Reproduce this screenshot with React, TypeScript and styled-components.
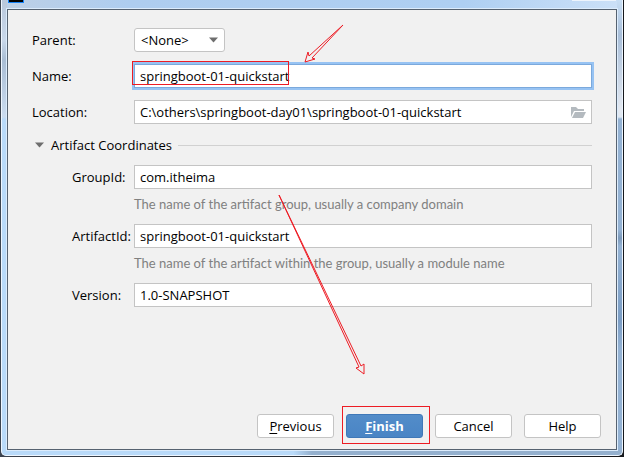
import React from "react";
import styled, { createGlobalStyle, css } from "styled-components";

const GlobalStyle = createGlobalStyle`
  * { box-sizing: border-box; }
  body {
    margin: 0;
    background: #202a38;
    color: #000;
    font-family: "Open Sans", "Noto Sans", sans-serif;
    font-size: 13px;
    line-height: 18px;
  }
  input, select, button { font: inherit; color: inherit; }
`;

const Screen = styled.div`
  display: flex;
  min-height: 100vh;
  padding: 0 1px 1px;
  background: linear-gradient(90deg, #3c4450, #16181c);
`;

const WindowFrame = styled.div`
  position: relative;
  flex: 1;
  display: flex;
  flex-direction: column;
  padding: 0 5px 5px;
  border: 1px solid #eef6ff;
  border-top: 0;
  border-radius: 0 0 5px 5px;
  background:
    linear-gradient(90deg, #b9daf9 0 47%, #94b0ce 50%) bottom / 100% 5px no-repeat,
    linear-gradient(#b9c8dc 0, #c9d8ea 40px, #a9bdd4 60px, #cbdcf0 117px, #b9daf9 119px) left / 5px 100% no-repeat,
    linear-gradient(#c9dff5 0, #a9bfd9 35px, #e3e8f0 110px, #dfe8f2 117px, #94b2d3 119px, #94b2d3 230px, #7c99ba 238px, #94b2d3 246px, #7b9dc4 320px, #94b2d3 350px) right / 5px 100% no-repeat,
    #b3d2f3;
`;

const TitleBar = styled.header`
  display: flex;
  justify-content: space-between;
  height: 9px;
  padding: 0 1px;
  background: linear-gradient(90deg, #bdd0e6, #aecdef 20%, #aecff2 75%, #cbe0f7);
`;

const AppIcon = styled.span`
  width: 16px;
  height: 3px;
  border: 1px solid #1683f7;
  border-top: 0;
  background: #000;
`;

const WindowControls = styled.span`
  width: 44px;
  height: 1px;
  background: #edf4fc;
`;

const Panel = styled.main`
  flex: 1;
  display: flex;
  flex-direction: column;
  border: 1px solid #566270;
  outline: 1px solid #dcecfc;
  background: #f1f1f1;
`;

const Form = styled.form`
  flex: 1;
  display: flex;
  flex-direction: column;
  padding: 18px 15px 11px 24px;
`;

const Fields = styled.div`
  display: grid;
  grid-template-columns: 102px 1fr;
  row-gap: 12px;
  align-items: center;
  padding-right: 9px;
`;

const Artifact = styled(Fields)`
  row-gap: 0;
  padding-top: 11px;
`;

const Label = styled.label<{ $nested?: boolean }>`
  padding-left: ${(p) => (p.$nested ? 40 : 0)}px;
  white-space: nowrap;
`;

const Control = styled.div`
  position: relative;
  display: flex;
  align-items: center;
`;

const TextInput = styled.input<{ $focused?: boolean }>`
  width: 100%;
  min-width: 0;
  height: 24px;
  padding: 0 5px;
  border: 1px solid #c4c4c4;
  border-radius: 0;
  background: #fff;
  outline: none;
  ${(p) =>
    p.$focused &&
    css`
      border-color: #7ba9dc;
      box-shadow: 0 0 0 2px #97c3f3;
    `}
`;

const Select = styled.select`
  appearance: none;
  width: 91px;
  height: 24px;
  padding: 0 6px;
  border: 1px solid #c4c4c4;
  border-radius: 3px;
  background: #fff;
`;

const SelectArrow = styled.svg`
  position: absolute;
  left: 75px;
  pointer-events: none;
`;

const BrowseButton = styled.button`
  position: absolute;
  right: 6px;
  display: flex;
  padding: 0;
  border: 0;
  background: none;
`;

const Hint = styled.p`
  grid-column: 2;
  margin: 0;
  padding: 6px 0 11px;
  color: #808080;
  font-family: Lato, "Open Sans", sans-serif;
`;

const SectionToggle = styled.button`
  display: flex;
  align-items: center;
  margin: 12px 9px 0 0;
  padding: 0 0 0 3px;
  border: 0;
  background: none;
  white-space: nowrap;
  &::after {
    content: "";
    flex: 1;
    height: 1px;
    margin-left: 6px;
    background: #d1d1d1;
  }
  svg { margin-right: 6px; }
`;

const Footer = styled.footer`
  display: flex;
  justify-content: flex-end;
  gap: 12px;
  margin-top: auto;
`;

const ButtonSlot = styled.div`
  position: relative;
`;

const Button = styled.button<{ $primary?: boolean }>`
  display: block;
  width: 77px;
  height: 24px;
  padding: 0;
  border: 1px solid ${(p) => (p.$primary ? "#3f78b8" : "#c4c4c4")};
  border-radius: 3px;
  background: ${(p) => (p.$primary ? "linear-gradient(#528cc9, #4a85c5)" : "#fff")};
  color: ${(p) => (p.$primary ? "#fff" : "#000")};
  font-weight: ${(p) => (p.$primary ? 700 : 400)};
  u { text-underline-offset: 2px; }
`;

const Highlight = styled.span<{ $wide?: boolean }>`
  position: absolute;
  border: 1px solid #ed1c24;
  pointer-events: none;
  ${(p) => (p.$wide ? "left: -2px; top: -3px; width: 157px; height: 24px;" : "inset: -8px -7px -6px -4px;")}
`;

const Arrows = styled.svg`
  position: absolute;
  left: -2px;
  top: 0;
  pointer-events: none;
`;

const Triangle = () => (
  <svg width="10" height="6" viewBox="0 0 10 6" aria-hidden="true">
    <path d="M0 0.5H9L4.5 5.5Z" fill="#6e6e6e" />
  </svg>
);

interface FieldProps {
  id: string;
  label: string;
  value: string;
  nested?: boolean;
  focused?: boolean;
  hint?: string;
  children?: React.ReactNode;
}

const Field = ({ id, label, value, nested, focused, hint, children }: FieldProps) => (
  <>
    <Label htmlFor={id} $nested={nested}>{label}</Label>
    <Control>
      <TextInput id={id} defaultValue={value} $focused={focused} spellCheck={false} />
      {children}
    </Control>
    {hint && <Hint>{hint}</Hint>}
  </>
);

export default function App() {
  return (
    <>
      <GlobalStyle />
      <Screen>
        <WindowFrame>
          <TitleBar>
            <AppIcon />
            <WindowControls />
          </TitleBar>
          <Panel>
            <Form onSubmit={(e) => e.preventDefault()}>
              <Fields>
                <Label htmlFor="parent">Parent:</Label>
                <Control>
                  <Select id="parent">
                    <option>&lt;None&gt;</option>
                  </Select>
                  <SelectArrow width="10" height="6" viewBox="0 0 10 6" aria-hidden="true">
                    <path d="M0 0.5H9L4.5 5.5Z" fill="#6e6e6e" />
                  </SelectArrow>
                </Control>
                <Field id="name" label="Name:" value="springboot-01-quickstart" focused>
                  <Highlight $wide />
                </Field>
                <Field id="location" label="Location:" value="C:\others\springboot-day01\springboot-01-quickstart">
                  <BrowseButton type="button" aria-label="Browse">
                    <svg width="15" height="11" viewBox="0 0 15 11" aria-hidden="true">
                      <path d="M0 0H5L7 2H13V4H3L0 10Z" fill="#b4babf" />
                      <path d="M4 5H15L12 11H1Z" fill="#b4babf" />
                    </svg>
                  </BrowseButton>
                </Field>
              </Fields>
              <SectionToggle type="button" aria-expanded="true">
                <Triangle />
                Artifact Coordinates
              </SectionToggle>
              <Artifact>
                <Field
                  id="group" label="GroupId:" value="com.itheima" nested
                  hint="The name of the artifact group, usually a company domain"
                />
                <Field
                  id="artifact" label="ArtifactId:" value="springboot-01-quickstart" nested
                  hint="The name of the artifact within the group, usually a module name"
                />
                <Field id="version" label="Version:" value="1.0-SNAPSHOT" nested />
              </Artifact>
              <Footer>
                <Button type="button"><u>P</u>revious</Button>
                <ButtonSlot>
                  <Button type="submit" $primary><u>F</u>inish</Button>
                  <Highlight />
                </ButtonSlot>
                <Button type="button">Cancel</Button>
                <Button type="button">Help</Button>
              </Footer>
            </Form>
          </Panel>
          <Arrows width="380" height="380" viewBox="0 0 380 380" fill="none" stroke="#ed1c24" aria-hidden="true">
            <path d="M343 25L309 56L308 52L305 62L315 59L312 58Z" />
            <path d="M279 195L359 367L356 368L364 374L364 364L361 366Z" />
          </Arrows>
        </WindowFrame>
      </Screen>
    </>
  );
}
